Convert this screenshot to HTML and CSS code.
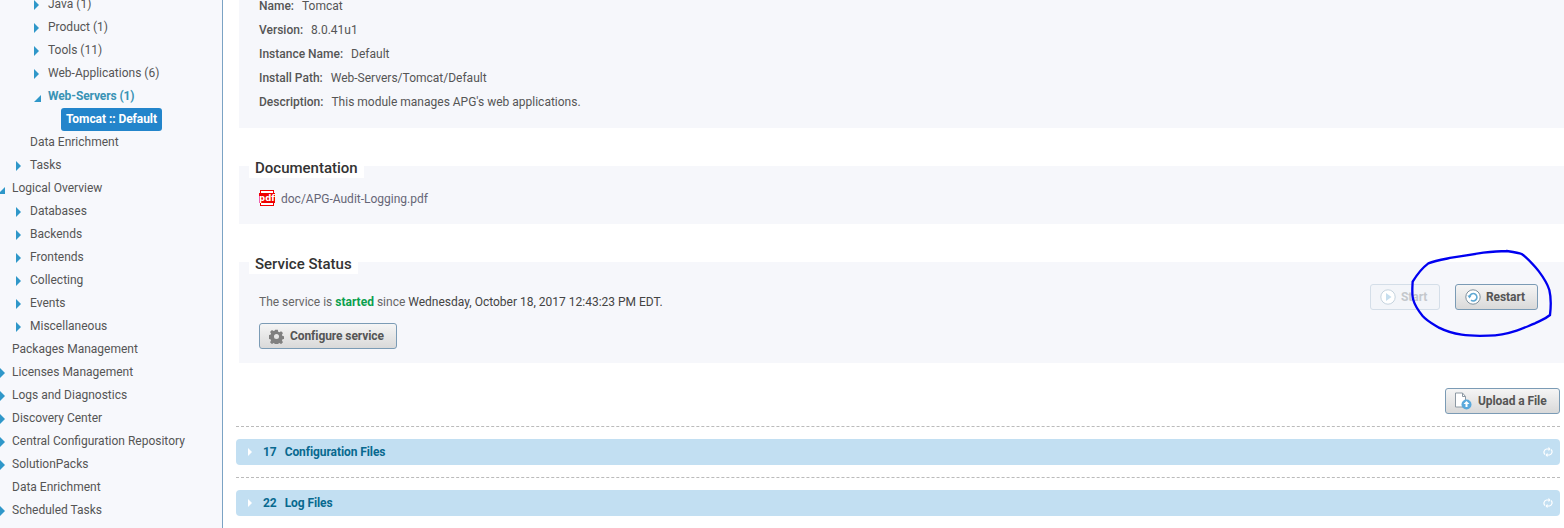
FILE: index.html
```html
<!DOCTYPE html>
<html lang="en">
<head>
<meta charset="utf-8">
<title>Tomcat :: Default</title>
<link rel="stylesheet" href="styles.css">
</head>
<body>
<div class="app">
  <nav class="sidebar">
    <ul class="tree">
      <li class="row lvl2"><i class="arr"></i>Java (1)</li>
      <li class="row lvl2"><i class="arr"></i>Product (1)</li>
      <li class="row lvl2"><i class="arr"></i>Tools (11)</li>
      <li class="row lvl2"><i class="arr"></i>Web-Applications (6)</li>
      <li class="row lvl2 open"><i class="arr-open"></i>Web-Servers (1)</li>
      <li class="row lvl3"><span class="selected">Tomcat :: Default</span></li>
      <li class="row lvl1 leaf">Data Enrichment</li>
      <li class="row lvl1"><i class="arr"></i>Tasks</li>
      <li class="row lvl0"><i class="arr-open"></i>Logical Overview</li>
      <li class="row lvl1"><i class="arr"></i>Databases</li>
      <li class="row lvl1"><i class="arr"></i>Backends</li>
      <li class="row lvl1"><i class="arr"></i>Frontends</li>
      <li class="row lvl1"><i class="arr"></i>Collecting</li>
      <li class="row lvl1"><i class="arr"></i>Events</li>
      <li class="row lvl1"><i class="arr"></i>Miscellaneous</li>
      <li class="row lvl0 leaf">Packages Management</li>
      <li class="row lvl0"><i class="arr"></i>Licenses Management</li>
      <li class="row lvl0"><i class="arr"></i>Logs and Diagnostics</li>
      <li class="row lvl0"><i class="arr"></i>Discovery Center</li>
      <li class="row lvl0"><i class="arr"></i>Central Configuration Repository</li>
      <li class="row lvl0"><i class="arr"></i>SolutionPacks</li>
      <li class="row lvl0 leaf">Data Enrichment</li>
      <li class="row lvl0"><i class="arr"></i>Scheduled Tasks</li>
    </ul>
  </nav>
  <main class="main">
    <section class="panel info">
      <p class="line"><b>Name:</b>Tomcat</p>
      <p class="line"><b>Version:</b>8.0.41u1</p>
      <p class="line"><b>Instance Name:</b>Default</p>
      <p class="line"><b>Install Path:</b>Web-Servers/Tomcat/Default</p>
      <p class="line"><b>Description:</b>This module manages APG's web applications.</p>
    </section>
    <section class="panel docs">
      <h2 class="legend">Documentation</h2>
      <div class="doc">
        <svg class="pdf" width="16" height="16" viewBox="0 0 16 16">
          <rect x="1.5" y="0.5" width="13" height="15" fill="#fff" stroke="#f00000"/>
          <rect x="0" y="3" width="16" height="10" fill="#f00000"/>
          <text x="8" y="11" text-anchor="middle" class="pdf-text">pdf</text>
        </svg>
        <span class="doc-link">doc/APG-Audit-Logging.pdf</span>
      </div>
    </section>
    <section class="panel status">
      <h2 class="legend">Service Status</h2>
      <div class="status-body">
        <div class="status-left">
          <p class="status-text">The service is <strong>started</strong> since <span class="dark">Wednesday, October 18, 2017 12:43:23 PM EDT.</span></p>
          <button class="btn cfg">
            <svg width="15" height="15" viewBox="0 0 16 16"><path fill="#808080" fill-rule="evenodd" d="M6.6 0.8h2.8l.4 2 1.3.6 1.8-1.1 2 2-1.1 1.8.6 1.3 2 .4v2.8l-2 .4-.6 1.3 1.1 1.8-2 2-1.8-1.1-1.3.6-.4 2H6.6l-.4-2-1.3-.6-1.8 1.1-2-2 1.1-1.8-.6-1.3-2-.4V6.6l2-.4.6-1.3-1.1-1.8 2-2 1.8 1.1 1.3-.6zM8 5.3a2.7 2.7 0 1 0 0 5.4 2.7 2.7 0 0 0 0-5.4z"/></svg>
            <span>Configure service</span>
          </button>
        </div>
        <div class="status-actions">
          <button class="btn start">
            <svg width="16" height="16" viewBox="0 0 16 16"><circle cx="8" cy="8" r="7.2" fill="#fff" stroke="#c5d3de"/><path d="M6 4l5.5 4-5.5 4z" fill="#c6deee"/></svg>
            <span>Start</span>
          </button>
          <button class="btn restart">
            <svg width="16" height="16" viewBox="0 0 16 16"><circle cx="8" cy="8" r="7.2" fill="#fff" stroke="#7f909c"/><path d="M4.6 7.4A3.7 3.7 0 1 1 6 11.2" fill="none" stroke="#5fa8d3" stroke-width="1.6"/><path d="M2.4 6.4h4.2L4.5 9.4z" fill="#5fa8d3"/></svg>
            <span>Restart</span>
          </button>
        </div>
      </div>
    </section>
    <div class="upload-row">
      <button class="btn upload">
        <svg width="18" height="18" viewBox="0 0 18 18"><path d="M1.5 1h7l3 3.5V15h-10z" fill="#fff" stroke="#8d99a3"/><path d="M8.5 1v3.5h3" fill="none" stroke="#8d99a3"/><circle cx="12.5" cy="12.5" r="5" fill="#5aa9dc"/><path d="M12.5 9l3 3h-2v3h-2v-3h-2z" fill="#fff"/></svg>
        <span>Upload a File</span>
      </button>
    </div>
    <div class="acc-wrap">
      <div class="acc"><i class="acc-arr"></i><span class="num">17</span><span>Configuration Files</span>
        <svg class="sync" width="10" height="12" viewBox="0 0 10 12"><path d="M2 8.5A3.2 3.2 0 0 1 3.5 3H6M8 3.5A3.2 3.2 0 0 1 6.5 9H4" fill="none" stroke="#fff" stroke-width="1.2"/><path d="M5.5 .8L7.5 3 5.5 5.2zM4.5 6.8L2.5 9l2 2.2z" fill="#fff"/></svg>
      </div>
    </div>
    <div class="acc-wrap">
      <div class="acc"><i class="acc-arr"></i><span class="num">22</span><span>Log Files</span>
        <svg class="sync" width="10" height="12" viewBox="0 0 10 12"><path d="M2 8.5A3.2 3.2 0 0 1 3.5 3H6M8 3.5A3.2 3.2 0 0 1 6.5 9H4" fill="none" stroke="#fff" stroke-width="1.2"/><path d="M5.5 .8L7.5 3 5.5 5.2zM4.5 6.8L2.5 9l2 2.2z" fill="#fff"/></svg>
      </div>
    </div>
  </main>
</div>
<svg class="ink" width="214" height="110" viewBox="0 0 642 330">
  <path d="M470 33C490 36 505 38 515 42C535 55 550 75 565 92C580 112 592 130 598 150C604 175 603 200 600 225C585 238 570 242 555 250C535 258 520 265 500 272C470 282 445 287 415 287C385 288 360 288 335 284C310 280 285 272 265 262C245 250 230 242 218 228C205 212 195 198 190 180C185 165 187 145 188 125C200 105 215 85 235 70C255 62 280 58 305 53C345 47 370 43 400 38C425 35 445 33 470 33" fill="none" stroke="#0000f0" stroke-width="7" stroke-linecap="round"/>
</svg>
</body>
</html>
```

FILE: styles.css
```css
* { box-sizing: border-box; }
html, body { margin: 0; height: 528px; overflow: hidden; background: #fff; }
body { font-family: Roboto, "Liberation Sans", sans-serif; font-size: 12px; color: #555; }
.app { display: flex; height: 528px; overflow: hidden; }
.sidebar { width: 223px; flex: none; height: 528px; background: #f7f8fc; border-right: 1px solid #7ba3c4; overflow: hidden; }
.tree { list-style: none; margin: -7px 0 0; padding: 0; }
.row { height: 23px; line-height: 23px; white-space: nowrap; display: flex; align-items: center; color: #555; }
.lvl0 { padding-left: 12px; }
.lvl1 { padding-left: 30px; }
.lvl2 { padding-left: 48px; }
.lvl3 { padding-left: 61px; }
.arr, .arr-open { display: block; flex: none; width: 0; height: 0; position: relative; }
.arr::before { content: ""; position: absolute; left: -14px; top: -5px; border-left: 5px solid #2f97c9; border-top: 5px solid transparent; border-bottom: 5px solid transparent; }
.lvl0 .arr::before { left: -12px; }
.arr-open::before { content: ""; position: absolute; left: -14px; top: -2px; border-bottom: 7px solid #2f97c9; border-left: 7px solid transparent; }
.open { color: #3a93b5; font-weight: 700; letter-spacing: -.1px; }
.selected { display: block; height: 23px; line-height: 23px; padding: 0 5px; background: #2385cb; color: #fff; font-weight: 700; letter-spacing: -.06px; border-radius: 3px; }
.main { flex: 1; min-width: 0; position: relative; }
.panel { background: #f6f7fb; margin-left: 16px; position: relative; }
.info { padding: 0 0 0 20px; display: flex; flex-direction: column; margin-top: -6px; height: 134px; }
.line { margin: 0; height: 24px; line-height: 24px; white-space: nowrap; }
.line b { color: #555; font-weight: 500; margin-right: 8px; }
.docs { margin-top: 38px; height: 58px; padding: 20px 0 0 20px; }
.legend { position: absolute; left: 10px; top: -8px; margin: 0; padding: 0 6px; height: 20px; line-height: 20px; font-size: 15px; font-weight: 500; color: #333; background: #fff; }
.doc { display: flex; align-items: center; gap: 6px; height: 24px; color: #667; }
.doc-link { padding-top: 1px; }
.pdf-text { font: 700 8.5px "DejaVu Sans", sans-serif; fill: #fff; }
.status { margin-top: 38px; height: 101px; padding: 0 26px 0 20px; }
.status-body { display: flex; justify-content: space-between; }
.status-text { margin: 29px 0 0; height: 22px; line-height: 22px; color: #666; white-space: nowrap; }
.status-text strong { color: #0ba04e; font-weight: 700; }
.dark { color: #444; }
.btn { display: inline-flex; align-items: center; font: 700 12px Roboto, sans-serif; letter-spacing: -.08px; color: #555; border: 1px solid #7b9bb5; border-radius: 3px; background: linear-gradient(#f5f5f5, #d9d9d9); padding: 0; height: 26px; }
.cfg { margin-top: 10px; width: 138px; padding-left: 9px; gap: 6px; }
.status-actions { display: flex; gap: 15px; margin-top: 22px; }
.start { width: 70px; padding-left: 9px; gap: 5px; color: #c4c8cc; background: #f3f5f9; border-color: #d4dee8; }
.restart { width: 83px; padding-left: 9px; gap: 5px; }
.upload-row { display: flex; justify-content: flex-end; padding-right: 4px; margin-top: 25px; height: 38px; }
.upload { width: 115px; padding-left: 8px; gap: 6px; }
.acc-wrap { border-top: 1px dashed #bbb; margin: 0 4px 0 13px; padding-top: 12px; height: 51px; }
.acc { height: 26px; background: #c2dff2; border-radius: 4px; display: flex; align-items: center; padding-left: 27px; color: #08698f; font-weight: 700; letter-spacing: -.08px; position: relative; }
.acc-arr { position: absolute; left: 12px; top: 9px; border-left: 4px solid #fff; border-top: 4px solid transparent; border-bottom: 4px solid transparent; }
.num { margin-right: 8px; }
.sync { position: absolute; right: 7px; top: 7px; }
.ink { position: absolute; left: 1350px; top: 240px; }
```
